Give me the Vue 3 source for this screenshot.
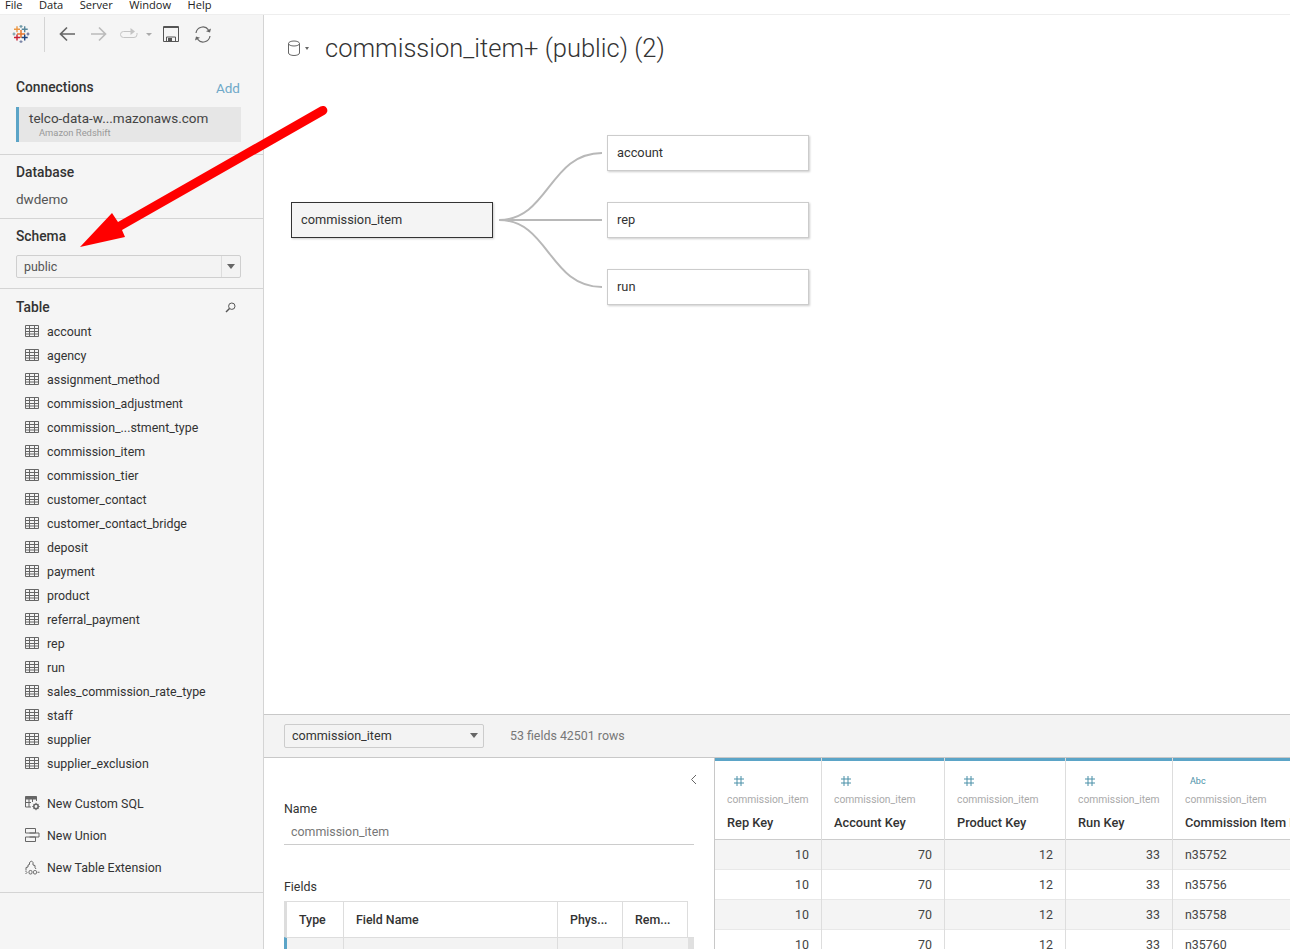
<template>
  <div class="app">
    <div class="menubar">
      <span v-for="m in menus" :key="m">{{ m }}</span>
    </div>
    <div class="workspace">
      <aside class="sidebar">
        <div class="toolbar">
          <svg class="logo" width="18" height="18" viewBox="0 0 18 18" fill="none">
            <path d="M9 5v8M5 9h8" stroke="#e8762c" stroke-width="1.500" />
            <path d="M5 1.300v6M2 4.300h6" stroke="#eb9744" stroke-width="1.400" />
            <path d="M12.700 1.300v6M9.700 4.300h6" stroke="#59879b" stroke-width="1.400" />
            <path d="M5 9.500v6M2 12.500h6" stroke="#c72035" stroke-width="1.400" />
            <path d="M12.700 9.500v6M9.700 12.500h6" stroke="#1f447e" stroke-width="1.400" />
            <path d="M9 0v3M7.500 1.400h3" stroke="#7099a6" stroke-width="1.200" />
            <path d="M9 15.200v3M7.500 16.600h3" stroke="#7c86a8" stroke-width="1.200" />
            <path d="M2 7.500v3M.5 9h3" stroke="#7099a6" stroke-width="1.200" />
            <path d="M16 7.500v3M14.500 9h3" stroke="#5b6591" stroke-width="1.200" />
          </svg>
          <div class="tool-sep"></div>
          <svg class="tool arrow-tool" width="16" height="16" viewBox="0 0 16 16" fill="none" stroke="#666" stroke-width="1.700">
            <path d="M16 8H1.500M8 1.500 1.500 8 8 14.500" />
          </svg>
          <svg class="tool arrow-fwd" width="16" height="16" viewBox="0 0 16 16" fill="none" stroke="#bbb" stroke-width="1.700">
            <path d="M0 8h14.500M8 1.500 14.500 8 8 14.500" />
          </svg>
          <svg class="tool redo" width="19" height="12" viewBox="0 0 19 12" fill="none" stroke="#c4c4c4" stroke-width="1">
            <path d="M11 3.500H3.500a3 3 0 0 0 0 6H14a3 3 0 0 0 3-3V5" />
            <path d="M10.500 0 15 3.500 10.500 7z" fill="#c4c4c4" stroke="none" />
          </svg>
          <span class="caret small"></span>
          <svg class="tool save" width="16" height="16" viewBox="0 0 16 16" fill="none" stroke="#555" stroke-width="1">
            <path d="M.5.500h15v15H.5zM.5 1.500h15M3.500 15.500v-4.500h9v4.500" />
            <rect x="5" y="12" width="4" height="3.500" fill="#555" stroke="none" />
          </svg>
          <svg class="tool" width="18" height="17" viewBox="0 0 18 17" fill="none" stroke="#666" stroke-width="1.200">
            <path d="M2 7a7 7 0 0 1 12.500-3.200M16 10a7 7 0 0 1-12.500 3.200" />
            <path d="M17 2.500 16 6.500 12 5.200z" fill="#666" stroke="none" />
            <path d="M1 14.500 2 10.500 6 11.800z" fill="#666" stroke="none" />
          </svg>
        </div>

        <section class="sec sec-conn">
          <div class="sec-head">
            <h3>Connections</h3>
            <a class="add">Add</a>
          </div>
          <div class="conn">
            <div class="conn-name">telco-data-w...mazonaws.com</div>
            <div class="conn-type">Amazon Redshift</div>
          </div>
        </section>

        <section class="sec sec-db">
          <h3>Database</h3>
          <div class="db-name">dwdemo</div>
        </section>

        <section class="sec sec-schema">
          <h3>Schema</h3>
          <div class="schema-select">
            <span class="schema-val">public</span>
            <span class="schema-btn"><span class="caret"></span></span>
          </div>
        </section>

        <section class="sec sec-table">
          <div class="sec-head table-head">
            <h3>Table</h3>
            <svg width="11" height="11" viewBox="0 0 11 11" fill="none" stroke="#555" stroke-width="1">
              <circle cx="6.800" cy="4.200" r="3.200" />
              <path d="M4.500 6.500 1 10" stroke-width="1.400" />
            </svg>
          </div>
          <ul class="tables">
            <li v-for="t in tables" :key="t">
              <svg width="14" height="12" viewBox="0 0 14 12" fill="none" stroke="#666" stroke-width="1">
                <path d="M.5.500h13v11H.5zM.5 3.500h13M.5 6.500h13M.5 9h13M4.500.500v11M9.500.500v11" />
              </svg>
              <span>{{ t }}</span>
            </li>
          </ul>
          <ul class="actions">
            <li>
              <svg width="15" height="15" viewBox="0 0 15 15" fill="none" stroke="#666" stroke-width="1">
                <path d="M.5.500h11v2.500H.5z" fill="#666" />
                <path d="M.5 3v8h5.500M.5 6.500h5.500M4 3v8M7.500 3v3M11.500 3v2" />
                <circle cx="11" cy="10.500" r="2.200" stroke-width="1.600" />
                <path d="M11 6.800v1.400M11 12.800v1.400M7.300 10.500h1.400M13.300 10.500h1.400M8.400 7.900l1 1M12.600 12.100l1 1M13.600 7.900l-1 1M9.400 12.100l-1 1" />
              </svg>
              <span>New Custom SQL</span>
            </li>
            <li>
              <svg width="15" height="15" viewBox="0 0 15 15" fill="none" stroke="#666" stroke-width="1">
                <path d="M.5.500h10v4.500H.5zM4.500 5h9.500v4H4.500M.5 9h10v4.500H.5z" />
              </svg>
              <span>New Union</span>
            </li>
            <li>
              <svg width="15" height="15" viewBox="0 0 15 15" fill="none" stroke="#666" stroke-width="1">
                <path d="M1 10.500V7.500l2-.5V5l1.500-.5V2.500l2-1.500 1.500 1.500V5l2 .5v2l1 1.500" />
                <path d="M.5 11l1.500 1.500L.5 14" />
                <rect x="4" y="10.500" width="3" height="3.500" rx="1.200" />
                <rect x="8.500" y="10.500" width="3" height="3.500" rx="1.200" />
                <path d="M12.500 12.250h2" />
              </svg>
              <span>New Table Extension</span>
            </li>
          </ul>
        </section>
      </aside>

      <main class="main">
        <div class="canvas">
          <div class="title-row">
            <svg width="14" height="17" viewBox="0 0 14 17" fill="none" stroke="#666" stroke-width="1">
              <ellipse cx="7" cy="3.500" rx="5.500" ry="2.500" />
              <path d="M1.500 3.500v9.500c0 1.400 2.500 2.500 5.500 2.500s5.500-1.100 5.500-2.500V3.500" />
            </svg>
            <span class="caret tiny"></span>
            <h1>commission_item+ (public) (2)</h1>
          </div>

          <svg class="links" width="120" height="160" viewBox="0 0 120 160" fill="none" stroke="#b8b8b8" stroke-width="2">
            <path d="M0 81H103" />
            <path d="M0 81C50 81 50 14 103 14" />
            <path d="M0 81C50 81 50 148 103 148" />
          </svg>
          <div class="node node-root">commission_item</div>
          <div v-for="(n, i) in nodes" :key="n" class="node node-child" :style="{ top: 120 + i * 67 + 'px' }">{{ n }}</div>
        </div>

        <div class="preview-bar">
          <div class="preview-select">
            <span>commission_item</span>
            <span class="caret"></span>
          </div>
          <span class="counts">53 fields 42501 rows</span>
        </div>

        <div class="preview">
          <div class="meta">
            <svg class="collapse" width="7" height="11" viewBox="0 0 7 11" fill="none" stroke="#666" stroke-width="1">
              <path d="M6 1 1.500 5.500 6 10" />
            </svg>
            <label class="meta-label">Name</label>
            <div class="meta-name">commission_item</div>
            <label class="meta-label fields-label">Fields</label>
            <div class="fields">
              <div class="fields-head">
                <div class="fc fc-type">Type</div>
                <div class="fc fc-name">Field Name</div>
                <div class="fc fc-phys">Phys...</div>
                <div class="fc fc-rem">Rem...</div>
              </div>
              <div class="fields-row">
                <div class="fc fc-type"><span class="hash">#</span></div>
                <div class="fc fc-name"></div>
                <div class="fc fc-phys"></div>
                <div class="fc fc-rem"><span class="rem">1</span></div>
              </div>
            </div>
          </div>

          <div class="grid">
            <div v-for="c in columns" :key="c.name" class="col" :style="{ width: c.width + 'px' }">
              <div class="col-head">
                <svg v-if="c.type === 'num'" class="hash-icon" width="10" height="10" viewBox="0 0 10 10" fill="none" stroke="#4a90a8" stroke-width="1">
                  <path d="M3 0v10M7 0v10M0 3h10M0 7h10" />
                </svg>
                <span v-else class="abc">Abc</span>
                <div class="col-src">commission_item</div>
                <div class="col-name">{{ c.name }}</div>
              </div>
              <div v-for="(v, i) in c.values" :key="i" class="cell" :class="{ odd: i % 2 === 0, num: c.type === 'num' }">{{ v }}</div>
            </div>
          </div>
        </div>
      </main>
    </div>

    <svg class="arrow" width="340" height="260" viewBox="0 0 340 260">
      <path d="M118 222 320.500 106.500a4.500 4.500 0 0 1 4.500 8L122 230l3 7-45 10 32-34z" fill="#ff0000" />
    </svg>
  </div>
</template>

<script setup>
const menus = ['File', 'Data', 'Server', 'Window', 'Help']

const tables = [
  'account',
  'agency',
  'assignment_method',
  'commission_adjustment',
  'commission_...stment_type',
  'commission_item',
  'commission_tier',
  'customer_contact',
  'customer_contact_bridge',
  'deposit',
  'payment',
  'product',
  'referral_payment',
  'rep',
  'run',
  'sales_commission_rate_type',
  'staff',
  'supplier',
  'supplier_exclusion'
]

const nodes = ['account', 'rep', 'run']

const columns = [
  { name: 'Rep Key', type: 'num', width: 107, values: [10, 10, 10, 10] },
  { name: 'Account Key', type: 'num', width: 123, values: [70, 70, 70, 70] },
  { name: 'Product Key', type: 'num', width: 121, values: [12, 12, 12, 12] },
  { name: 'Run Key', type: 'num', width: 107, values: [33, 33, 33, 33] },
  { name: 'Commission Item Key', type: 'abc', width: 200, values: ['n35752', 'n35756', 'n35758', 'n35760'] }
]
</script>

<style>
html, body {
  margin: 0;
  height: 100%;
  overflow: hidden;
  background: #fff;
}
</style>

<style scoped>
.app {
  position: relative;
  width: 1290px;
  height: 949px;
  overflow: hidden;
  font-family: Roboto, "Liberation Sans", sans-serif;
  font-size: 12.4px;
  color: #333;
}

.menubar {
  height: 14px;
  display: flex;
  align-items: flex-end;
  gap: 16.400px;
  padding-left: 5px;
  background: #fff;
  font-family: "Open Sans", sans-serif;
  font-size: 11.1px;
  line-height: 14px;
  color: #222;
  overflow: hidden;
}
.menubar span {
  position: relative;
  top: -2px;
}

.workspace {
  display: flex;
  height: 935px;
  border-top: 1px solid #eee;
  box-sizing: border-box;
}

.sidebar {
  width: 264px;
  flex: none;
  box-sizing: border-box;
  background: #f5f5f5;
  border-right: 1px solid #d4d4d4;
}

.toolbar {
  height: 50px;
  display: flex;
  align-items: center;
  padding: 0 0 12px 12px;
  box-sizing: border-box;
}
.logo {
  margin-right: 14px;
}
.tool-sep {
  width: 1px;
  height: 35px;
  background: #d4d4d4;
  margin-right: 14px;
}
.tool {
  flex: none;
}
.arrow-tool {
  margin-right: 16px;
}
.arrow-fwd {
  margin-right: 13px;
}
.redo {
  margin-right: 7px;
}
.save {
  margin: 0 15px 0 11px;
}

.caret {
  display: inline-block;
  width: 0;
  height: 0;
  border-left: 4px solid transparent;
  border-right: 4px solid transparent;
  border-top: 5px solid #666;
}
.caret.small {
  border-left-width: 3px;
  border-right-width: 3px;
  border-top: 3px solid #aaa;
}
.caret.tiny {
  border-left-width: 2.500px;
  border-right-width: 2.500px;
  border-top: 3px solid #666;
  margin-left: 4px;
}

.sec {
  box-sizing: border-box;
  padding: 0 22px 0 16px;
  border-bottom: 1px solid #d4d4d4;
}
h3 {
  margin: 0;
  font-size: 13.800px;
  line-height: 18px;
  font-weight: 500;
  color: #333;
}
.sec-head {
  display: flex;
  justify-content: space-between;
  align-items: center;
}
.sec-conn {
  height: 90px;
  padding-top: 13px;
}
.add {
  font-size: 13.500px;
  margin: 2px 1px 0 0;
  color: #6ea8c8;
}
.conn {
  margin-top: 11px;
  height: 35px;
  box-sizing: border-box;
  background: #e6e6e6;
  border-left: 3px solid #5ba4c7;
  padding: 3px 0 0 10px;
}
.conn-name {
  font-size: 13.500px;
  line-height: 16px;
  color: #444;
}
.conn-type {
  margin-top: 1px;
  font-size: 9.400px;
  line-height: 12px;
  color: #999;
  padding-left: 10px;
}

.sec-db {
  height: 64px;
  padding-top: 8px;
}
.db-name {
  margin-top: 9px;
  font-size: 13.500px;
  line-height: 18px;
  color: #555;
}

.sec-schema {
  height: 70px;
  padding-top: 8px;
}
.schema-select {
  margin-top: 10px;
  height: 23px;
  display: flex;
  box-sizing: border-box;
  border: 1px solid #cfcfcf;
  border-radius: 2px;
  background: #f3f3f3;
}
.schema-val {
  flex: 1;
  padding-left: 7px;
  line-height: 21px;
  color: #555;
}
.schema-btn {
  width: 18px;
  display: flex;
  align-items: center;
  justify-content: center;
  border-left: 1px solid #ddd;
}

.sec-table {
  height: 604px;
  padding: 9px 0 0 0;
}
.table-head {
  padding: 0 27px 0 16px;
}
.tables, .actions {
  list-style: none;
  margin: 0;
  padding: 0 0 0 25px;
}
.tables {
  margin-top: 3px;
}
.tables li {
  height: 24px;
  display: flex;
  align-items: center;
  gap: 8px;
  color: #333;
}
.actions {
  margin-top: 12px;
}
.actions li {
  height: 32px;
  display: flex;
  align-items: center;
  gap: 7px;
  color: #333;
}

.main {
  flex: 1;
  min-width: 0;
  display: flex;
  flex-direction: column;
}

.canvas {
  position: relative;
  flex: 1;
  background: #fff;
}
.title-row {
  position: absolute;
  left: 23px;
  top: 17px;
  display: flex;
  align-items: center;
}
h1 {
  margin: 0 0 0 16px;
  font-size: 25.500px;
  line-height: 32px;
  font-weight: 300;
  color: #333;
}
.links {
  position: absolute;
  left: 235px;
  top: 124px;
}
.node {
  position: absolute;
  box-sizing: border-box;
  width: 202px;
  height: 36px;
  padding-left: 9px;
  font-size: 12.800px;
  line-height: 34px;
  border: 1px solid #ccc;
  background: #fff;
  box-shadow: 1px 1px 2px rgba(0, 0, 0, .2);
  color: #333;
}
.node-root {
  left: 27px;
  top: 187px;
  background: #f4f4f4;
  border-color: #333;
}
.node-child {
  left: 343px;
}

.preview-bar {
  height: 44px;
  flex: none;
  box-sizing: border-box;
  display: flex;
  align-items: center;
  padding-left: 20px;
  background: #f3f3f3;
  border-top: 1px solid #c8c8c8;
  border-bottom: 1px solid #c8c8c8;
}
.preview-select {
  width: 200px;
  height: 24px;
  box-sizing: border-box;
  padding: 0 5px 1px 7px;
  display: flex;
  align-items: center;
  justify-content: space-between;
  border: 1px solid #ccc;
  border-radius: 2px;
  font-size: 12.600px;
  color: #333;
}
.counts {
  margin-left: 26px;
  padding-bottom: 1px;
  color: #777;
}

.preview {
  height: 191px;
  flex: none;
  display: flex;
  background: #fff;
  overflow: hidden;
}
.meta {
  position: relative;
  width: 450px;
  flex: none;
  box-sizing: border-box;
  padding: 43px 20px 0;
}
.collapse {
  position: absolute;
  right: 17px;
  top: 16px;
}
.meta-label {
  display: block;
  line-height: 16px;
  color: #333;
}
.meta-name {
  margin-top: 6px;
  height: 22px;
  box-sizing: border-box;
  padding-left: 7px;
  line-height: 18px;
  border-bottom: 1px solid #ccc;
  color: #777;
}
.fields-label {
  margin-top: 34px;
}
.fields {
  margin-top: 6px;
  width: 404px;
}
.fields-head, .fields-row {
  display: flex;
  height: 36px;
  box-sizing: border-box;
  border-top: 1px solid #ddd;
  border-right: 1px solid #ddd;
}
.fields-head {
  border-left: 3px solid #ddd;
}
.fields-row {
  border-left: 3px solid #5ba4c7;
  background: #f3f3f3;
  width: 410px;
  box-shadow: inset -6px 0 0 #e0e0e0;
  border-right: none;
}
.fc {
  flex: none;
  box-sizing: border-box;
  padding-left: 12px;
  line-height: 35px;
  font-weight: 500;
  border-right: 1px solid #ddd;
}
.fields-row .fc {
  line-height: 32px;
  font-weight: 400;
}
.fc-type {
  width: 57px;
}
.fc-name {
  width: 214px;
}
.fc-phys {
  width: 65px;
}
.fc-rem {
  width: 64px;
  border-right: none;
}
.hash {
  margin-left: 10px;
  color: #4a90a8;
}
.rem {
  margin-left: 24px;
}

.grid {
  flex: 1;
  min-width: 0;
  display: flex;
  overflow: hidden;
  border-left: 1px solid #c8c8c8;
}
.col {
  flex: none;
  box-sizing: border-box;
  border-right: 1px solid #ddd;
}
.col-head {
  height: 82px;
  box-sizing: border-box;
  padding: 15px 12px 0;
  border-top: 3px solid #5ba4c7;
  border-bottom: 1px solid #ccc;
}
.hash-icon {
  display: block;
  margin: 0 0 0 7px;
}
.abc {
  display: block;
  height: 10px;
  font-size: 9px;
  line-height: 10px;
  margin-left: 5px;
  color: #4a90a8;
}
.col-src {
  margin-top: 7px;
  font-size: 10.300px;
  line-height: 14px;
  color: #aaa;
  white-space: nowrap;
}
.col-name {
  margin-top: 8px;
  font-size: 12.800px;
  line-height: 16px;
  font-weight: 500;
  white-space: nowrap;
}
.cell {
  height: 30px;
  box-sizing: border-box;
  padding: 0 12px;
  line-height: 29px;
  border-bottom: 1px solid #e8e8e8;
  color: #444;
}
.cell.odd {
  background: #f4f4f4;
}
.cell.num {
  text-align: right;
}

.arrow {
  position: absolute;
  left: 0;
  top: 0;
  pointer-events: none;
}
</style>
